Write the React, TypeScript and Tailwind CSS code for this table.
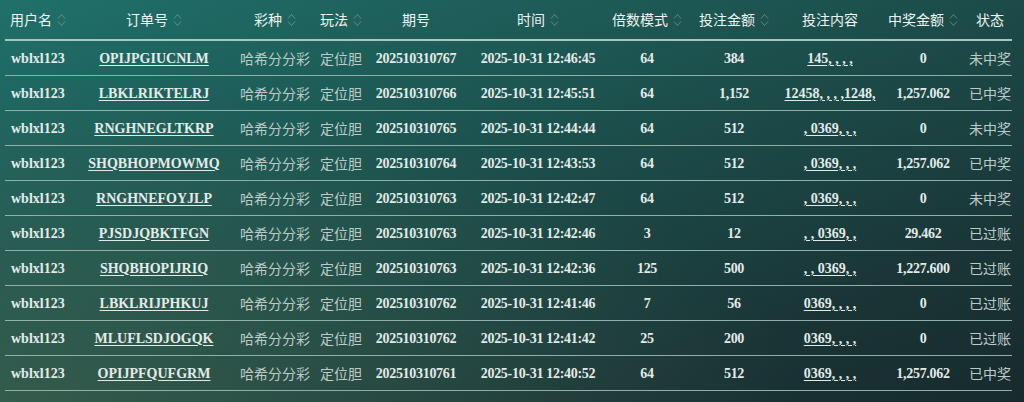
import React from 'react';

type Row = {
    user: string;
    order: string;
    issue: string;
    time: string;
    multiple: string;
    amount: string;
    content: string;
    prize: string;
    status: string;
};

const rows: Row[] = [
    { user: 'wblxl123', order: 'OPIJPGIUCNLM', issue: '202510310767', time: '2025-10-31 12:46:45', multiple: '64', amount: '384', content: '145, , , ,', prize: '0', status: '未中奖' },
    { user: 'wblxl123', order: 'LBKLRIKTELRJ', issue: '202510310766', time: '2025-10-31 12:45:51', multiple: '64', amount: '1,152', content: '12458, , , ,1248,', prize: '1,257.062', status: '已中奖' },
    { user: 'wblxl123', order: 'RNGHNEGLTKRP', issue: '202510310765', time: '2025-10-31 12:44:44', multiple: '64', amount: '512', content: ', 0369, , ,', prize: '0', status: '未中奖' },
    { user: 'wblxl123', order: 'SHQBHOPMOWMQ', issue: '202510310764', time: '2025-10-31 12:43:53', multiple: '64', amount: '512', content: ', 0369, , ,', prize: '1,257.062', status: '已中奖' },
    { user: 'wblxl123', order: 'RNGHNEFOYJLP', issue: '202510310763', time: '2025-10-31 12:42:47', multiple: '64', amount: '512', content: ', 0369, , ,', prize: '0', status: '未中奖' },
    { user: 'wblxl123', order: 'PJSDJQBKTFGN', issue: '202510310763', time: '2025-10-31 12:42:46', multiple: '3', amount: '12', content: ', , 0369, ,', prize: '29.462', status: '已过账' },
    { user: 'wblxl123', order: 'SHQBHOPIJRIQ', issue: '202510310763', time: '2025-10-31 12:42:36', multiple: '125', amount: '500', content: ', , 0369, ,', prize: '1,227.600', status: '已过账' },
    { user: 'wblxl123', order: 'LBKLRIJPHKUJ', issue: '202510310762', time: '2025-10-31 12:41:46', multiple: '7', amount: '56', content: '0369, , , ,', prize: '0', status: '已过账' },
    { user: 'wblxl123', order: 'MLUFLSDJOGQK', issue: '202510310762', time: '2025-10-31 12:41:42', multiple: '25', amount: '200', content: '0369, , , ,', prize: '0', status: '已过账' },
    { user: 'wblxl123', order: 'OPIJPFQUFGRM', issue: '202510310761', time: '2025-10-31 12:40:52', multiple: '64', amount: '512', content: '0369, , , ,', prize: '1,257.062', status: '已中奖' },
];

const grid = 'grid grid-cols-[71px_156px_86px_46px_104px_140px_78px_96px_96px_90px_44px] items-center';
const serif = "font-['Liberation_Serif','Noto_Sans_CJK_SC',serif] font-bold text-[14px] tracking-[-0.3px] text-[#e3ebe8]";
const cjk = "font-['Noto_Sans_CJK_SC',sans-serif] text-[14px] text-[#bccbc7]";

const SortIcon = () => (
    <svg width="9" height="16" viewBox="0 0 9 16" className="ml-[5px] shrink-0" fill="none" stroke="#a3b6b2" strokeOpacity="0.5" strokeWidth="1">
        <path d="M1 6.5 L4.5 2.5 L8 6.5" />
        <path d="M1 9.5 L4.5 13.5 L8 9.5" />
    </svg>
);

const Head = ({ label, sort, left }: { label: string; sort?: boolean; left?: boolean }) => (
    <div className={`flex items-center ${left ? 'justify-start pl-[5px]' : 'justify-center'} whitespace-nowrap`}>
        <span className="font-['Noto_Sans_CJK_SC',sans-serif] text-[14px] text-[#eef3f1]">{label}</span>
        {sort && <SortIcon />}
    </div>
);

const App: React.FC = () => {
    return (
        <div className="w-[1024px] h-[402px] overflow-hidden bg-[radial-gradient(ellipse_at_bottom_left,rgba(72,104,78,0.55),transparent_55%),linear-gradient(to_bottom_right,#20706a,#1c4f4c_45%,#1a3436_80%,#182a2d)]">
            <div className="ml-[5px] w-[1007px]">
                <div className={`${grid} h-[41px] border-b-2 border-[#a9c5c0]`}>
                    <Head label="用户名" sort left />
                    <Head label="订单号" sort />
                    <Head label="彩种" sort />
                    <Head label="玩法" sort />
                    <Head label="期号" />
                    <Head label="时间" sort />
                    <Head label="倍数模式" sort />
                    <Head label="投注金额" sort />
                    <Head label="投注内容" />
                    <Head label="中奖金额" sort />
                    <Head label="状态" />
                </div>
                {rows.map((r) => (
                    <div key={r.order} className={`${grid} h-[35px] border-b border-[#8fb0aa] whitespace-nowrap`}>
                        <div className={`${serif} pl-[6px] tracking-normal text-[#dce5e2]`}>{r.user}</div>
                        <div className={`${serif} text-center tracking-normal underline underline-offset-2`}>{r.order}</div>
                        <div className={`${cjk} text-center`}>哈希分分彩</div>
                        <div className={`${cjk} text-center`}>定位胆</div>
                        <div className={`${serif} text-center`}>{r.issue}</div>
                        <div className={`${serif} text-center`}>{r.time}</div>
                        <div className={`${serif} text-center`}>{r.multiple}</div>
                        <div className={`${serif} text-center`}>{r.amount}</div>
                        <div className={`${serif} text-center tracking-normal underline underline-offset-2`}>{r.content}</div>
                        <div className={`${serif} text-center`}>{r.prize}</div>
                        <div className={`${cjk} text-center`}>{r.status}</div>
                    </div>
                ))}
            </div>
        </div>
    );
};

export default App;
